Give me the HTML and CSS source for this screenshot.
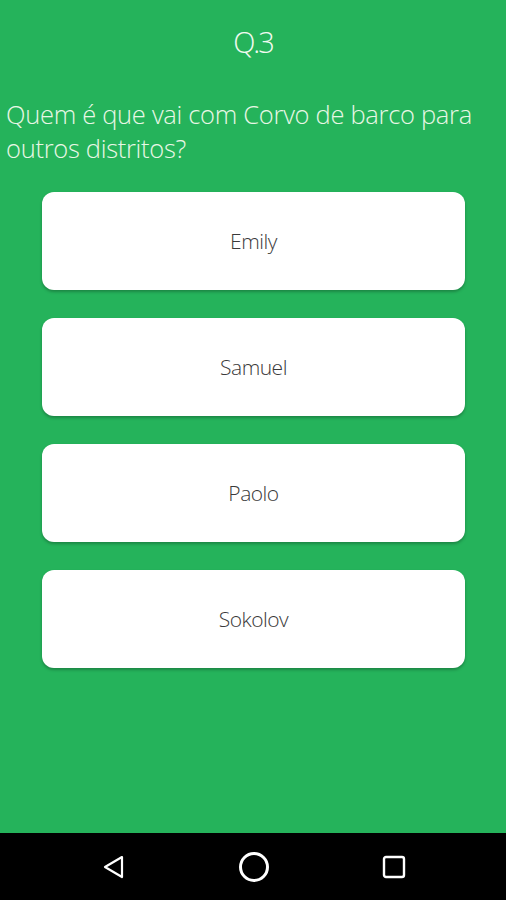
FILE: index.html
```html
<!DOCTYPE html>
<html lang="pt">
<head>
    <meta charset="UTF-8">
    <meta name="viewport" content="width=device-width, initial-scale=1.0">
    <title>Quiz</title>
    <link rel="stylesheet" href="styles.css">
</head>
<body>
    <div class="screen">
        <div class="quiz-container">
            <h2 class="question-number">Q.3</h2>
            <p class="question-text">Quem é que vai com Corvo de barco para outros distritos?</p>
            <div class="answers">
                <button class="answer">Emily</button>
                <button class="answer">Samuel</button>
                <button class="answer">Paolo</button>
                <button class="answer">Sokolov</button>
            </div>
        </div>
        <div class="nav-bar">
            <svg class="nav-icon" width="28" height="28" viewBox="0 0 28 28">
                <path d="M22 4 L5 14 L22 24 Z" fill="none" stroke="white" stroke-width="2.2" stroke-linejoin="round"/>
            </svg>
            <svg class="nav-icon" width="34" height="34" viewBox="0 0 34 34">
                <circle cx="17" cy="17" r="13.5" fill="none" stroke="white" stroke-width="3"/>
            </svg>
            <svg class="nav-icon" width="28" height="28" viewBox="0 0 28 28">
                <rect x="4" y="4" width="20" height="20" rx="2" fill="none" stroke="white" stroke-width="2.4"/>
            </svg>
        </div>
    </div>
</body>
</html>
```

FILE: styles.css
```css
body {
    margin: 0;
    font-family: "Open Sans", "Noto Sans", sans-serif;
    background-color: #000;
}
.screen {
    width: 506px;
    height: 900px;
    display: flex;
    flex-direction: column;
}
.quiz-container {
    flex: 1;
    background-color: #25b35b;
    padding-top: 22px;
}
.question-number {
    margin: 0;
    text-align: center;
    color: #f1faf0;
    font-weight: 300;
    font-size: 29px;
    line-height: 40px;
    letter-spacing: -2px;
}
.question-text {
    margin: 35px 0 0 0;
    padding: 0 6px;
    color: #e9f7e6;
    font-weight: 300;
    font-size: 25.5px;
    line-height: 34px;
    letter-spacing: -0.3px;
}
.answers {
    display: flex;
    flex-direction: column;
    gap: 28px;
    margin-top: 27px;
    padding: 0 41px 0 42px;
}
.answer {
    height: 98px;
    background-color: white;
    border: none;
    border-radius: 12px;
    box-shadow: 0 2px 3px rgba(0, 0, 0, 0.25);
    font-family: "Open Sans", "Noto Sans", sans-serif;
    font-weight: 300;
    font-size: 21px;
    letter-spacing: -0.5px;
    color: #3a3a3a;
    cursor: pointer;
}
.nav-bar {
    height: 67px;
    background-color: #000;
    display: flex;
    align-items: center;
    justify-content: space-between;
    padding: 0 98px 0 100px;
}
```
